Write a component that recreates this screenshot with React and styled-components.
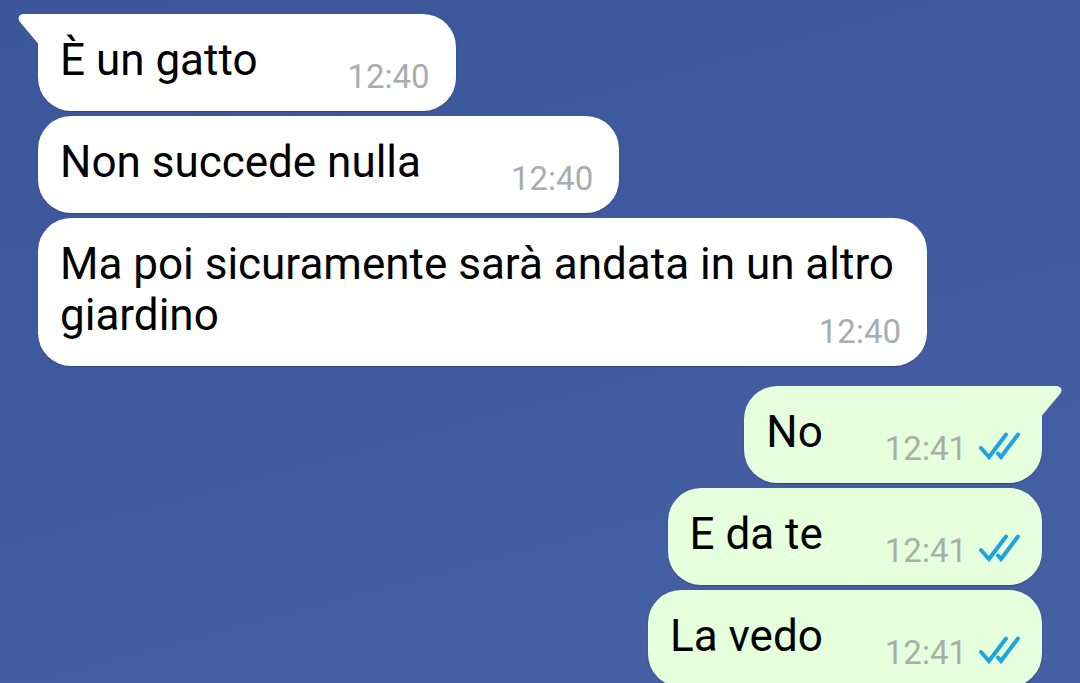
import React from 'react';
import styled, { createGlobalStyle, css } from 'styled-components';

const GlobalStyle = createGlobalStyle`
  *, *::before, *::after { box-sizing: border-box; }
  body {
    margin: 0;
    font-family: Roboto, "Liberation Sans", sans-serif;
  }
`;

const INCOMING = '#ffffff';
const OUTGOING = '#e6ffdc';

const Chat = styled.main`
  height: 100vh;
  overflow-y: auto;
  scrollbar-width: none;
  display: flex;
  flex-direction: column;
  gap: 20px;
  padding: 14px 38px 0;
  background: linear-gradient(165deg, #3c569a 0%, #405a9f 45%, #4561a3 100%);
`;

const Group = styled.ol`
  margin: 0;
  padding: 0;
  list-style: none;
  display: flex;
  flex-direction: column;
  flex-shrink: 0;
  align-items: ${(p) => (p.$own ? 'flex-end' : 'flex-start')};
  gap: 5px;
`;

const firstBubble = css`
  ${(p) => (p.$own ? 'border-top-right-radius: 0;' : 'border-top-left-radius: 0;')}
`;

const Bubble = styled.li`
  position: relative;
  display: flow-root;
  max-width: calc(100% - 115px);
  padding: 21px ${(p) => (p.$own ? 22 : 26)}px 15px 22px;
  border-radius: 33px;
  background: ${(p) => (p.$own ? OUTGOING : INCOMING)};
  box-shadow: 0 1px 1px rgba(20, 35, 80, 0.35);
  line-height: 51px;
  font-size: 44px;
  color: #000;
  ${(p) => p.$first && firstBubble}
`;

const Tail = styled.svg`
  position: absolute;
  top: 0;
  ${(p) => (p.$own ? 'left: calc(100% - 1px);' : 'right: calc(100% - 1px); transform: scaleX(-1);')}
  width: 21px;
  height: 30px;
  fill: ${(p) => (p.$own ? OUTGOING : INCOMING)};
`;

/* floats beside the last line of the message */
const Meta = styled.span`
  float: right;
  display: flex;
  align-items: center;
  gap: 11px;
  margin-top: 23px;
  margin-left: ${(p) => (p.$own ? 62 : 90)}px;
`;

const Time = styled.time`
  font-size: 33px;
  line-height: 38px;
  color: ${(p) => (p.$own ? '#a6b0a6' : '#a8adaf')};
`;

const Ticks = styled.svg`
  width: 42px;
  height: 38px;
  fill: none;
  stroke: #1ea5e0;
  stroke-width: 4;
  stroke-linecap: round;
`;

function Message({ text, time, own, first }) {
  return (
    <Bubble $own={own} $first={first}>
      {first && (
        <Tail $own={own} viewBox="0 0 21 30" aria-hidden="true">
          <path d="M0 0H15C20 0 22 4 19 8L1 29.500H0Z" />
        </Tail>
      )}
      <span>{text}</span>
      <Meta $own={own}>
        <Time $own={own} dateTime={time}>{time}</Time>
        {own && (
          <Ticks viewBox="0 0 42 38" role="img" aria-label="Letto">
            <path d="M3 18L11 27L28 4.500M20 23.500L23 27L40 4.500" />
          </Ticks>
        )}
      </Meta>
    </Bubble>
  );
}

const groups = [
  {
    own: false,
    messages: [
      { text: 'È un gatto', time: '12:40' },
      { text: 'Non succede nulla', time: '12:40' },
      { text: 'Ma poi sicuramente sarà andata in un altro giardino', time: '12:40' },
    ],
  },
  {
    own: true,
    messages: [
      { text: 'No', time: '12:41' },
      { text: 'E da te', time: '12:41' },
      { text: 'La vedo', time: '12:41' },
    ],
  },
];

export default function App() {
  return (
    <>
      <GlobalStyle />
      <Chat>
        {groups.map((group, g) => (
          <Group key={g} $own={group.own}>
            {group.messages.map((message, i) => (
              <Message key={message.text} {...message} own={group.own} first={i === 0} />
            ))}
          </Group>
        ))}
      </Chat>
    </>
  );
}
